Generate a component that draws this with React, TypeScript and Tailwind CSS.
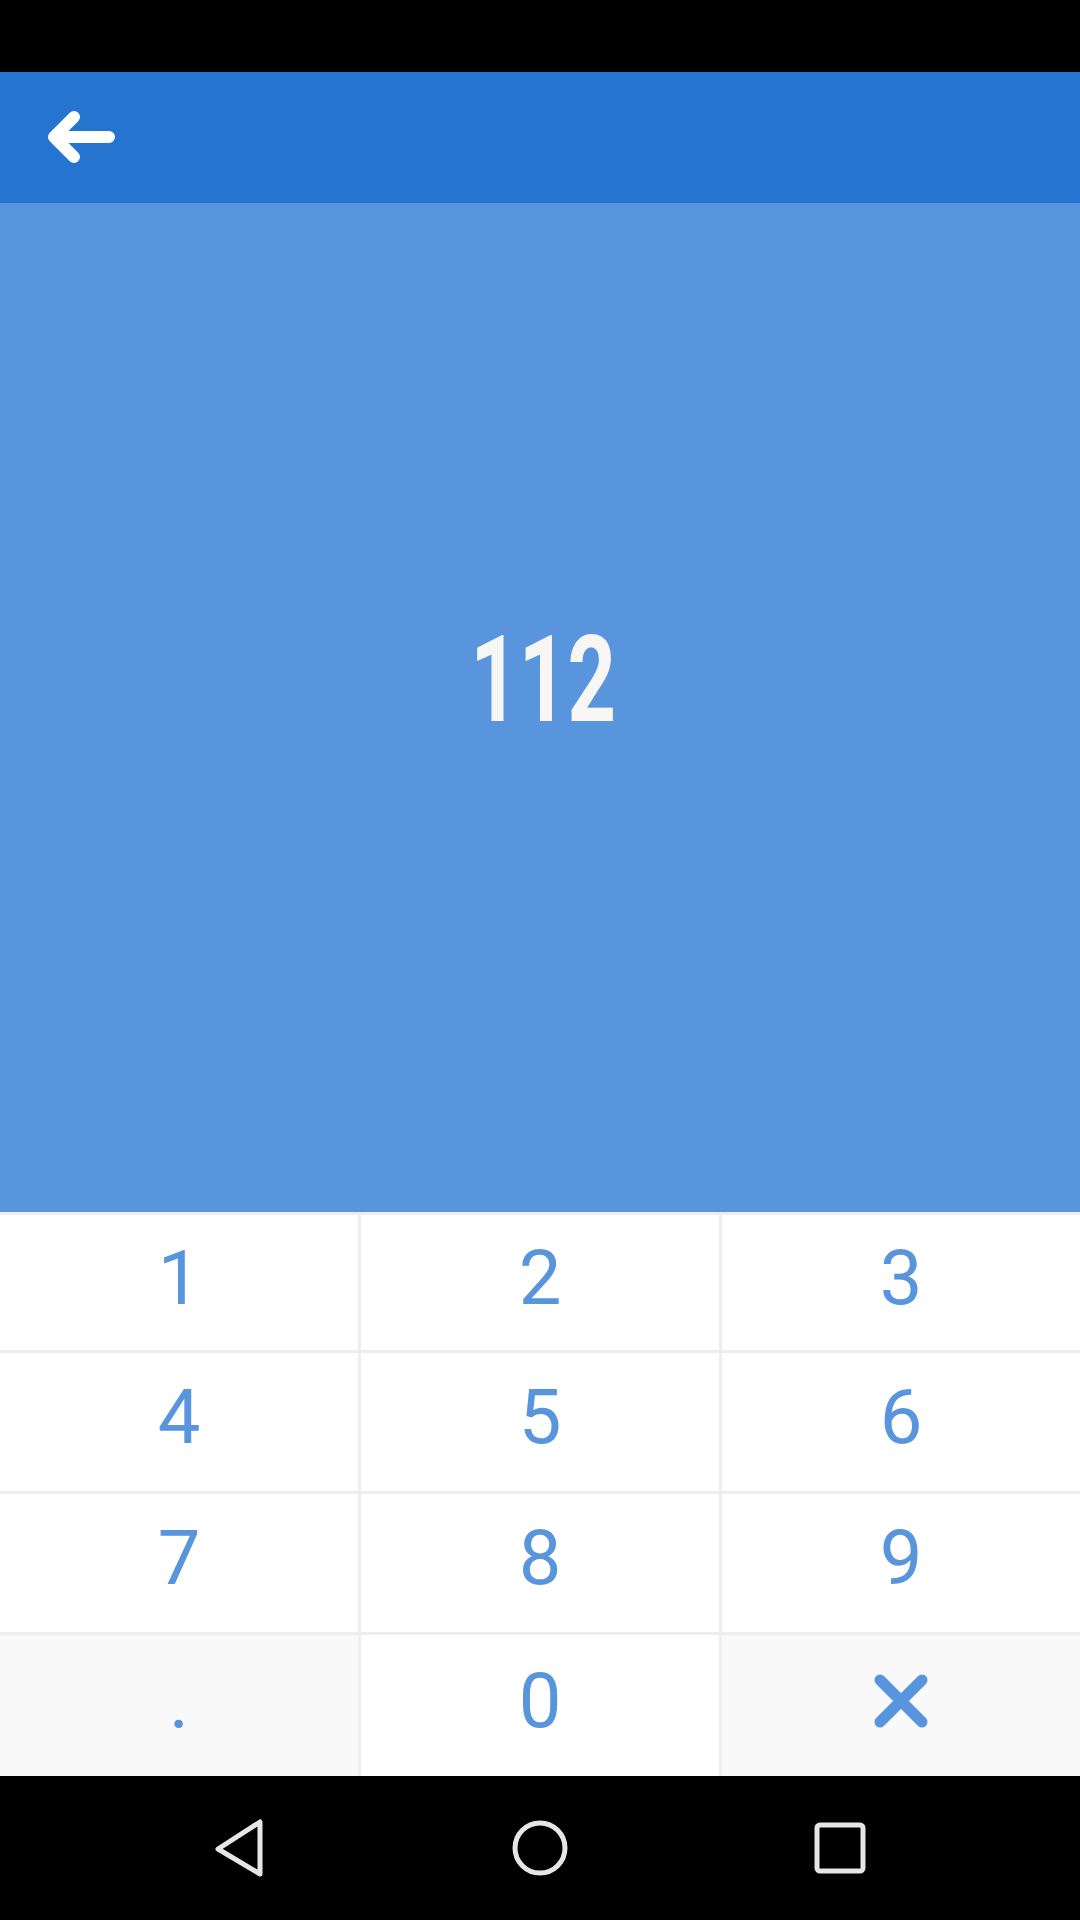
import { ReactNode } from 'react';

const KEYS: { label: ReactNode; muted?: boolean }[] = [
  { label: '1' },
  { label: '2' },
  { label: '3' },
  { label: '4' },
  { label: '5' },
  { label: '6' },
  { label: '7' },
  { label: '8' },
  { label: '9' },
  { label: '.', muted: true },
  { label: '0' },
  { label: <ClearIcon />, muted: true },
];

function BackArrow() {
  return (
    <svg width="80" height="64" viewBox="0 0 80 64" fill="none">
      <path
        d="M30 12 L10 32 L30 52 M10 32 L65 32"
        stroke="#ffffff"
        strokeWidth="12"
        strokeLinecap="round"
        strokeLinejoin="round"
      />
    </svg>
  );
}

function ClearIcon() {
  return (
    <svg width="60" height="60" viewBox="0 0 60 60" fill="none">
      <path d="M9 9 L51 51 M51 9 L9 51" stroke="#5995dc" strokeWidth="11" strokeLinecap="round" />
    </svg>
  );
}

function NavBar() {
  return (
    <div className="h-[144px] bg-black flex items-center justify-center gap-[244px]">
      <svg width="52" height="60" viewBox="0 0 52 60" fill="none">
        <path d="M46 4 L46 56 L4 31 Z" stroke="#e6e6e6" strokeWidth="5" strokeLinejoin="round" />
      </svg>
      <svg width="60" height="60" viewBox="0 0 60 60" fill="none">
        <circle cx="30" cy="30" r="25" stroke="#e6e6e6" strokeWidth="5" />
      </svg>
      <svg width="52" height="52" viewBox="0 0 52 52" fill="none">
        <rect x="3" y="3" width="46" height="46" rx="3" stroke="#e6e6e6" strokeWidth="5" />
      </svg>
    </div>
  );
}

export default function App() {
  return (
    <div className="w-[1080px] h-[1920px] flex flex-col overflow-hidden">
      {/* status bar */}
      <div className="h-[72px] bg-black" />

      {/* toolbar */}
      <div className="h-[131px] bg-[#2574cf] border-b border-[#1c6ddc] flex items-center pl-[44px]">
        <BackArrow />
      </div>

      {/* display */}
      <div className="flex-1 bg-[#5995dc] flex items-center justify-center pb-[55px] pl-[6px]">
        <span className="inline-block scale-x-[0.7] text-[121px] font-bold leading-none text-[#f8f6f4] font-[Roboto,sans-serif]">
          112
        </span>
      </div>

      {/* keypad */}
      <div className="h-[564px] bg-[#eeeeee] pt-[3px] grid grid-cols-3 grid-rows-[135px_138px_138px_141px] gap-[3px]">
        {KEYS.map((k, i) => (
          <button
            key={i}
            className={`flex items-center justify-center pb-[10px] text-[76px] leading-none text-[#5995dc] font-[Roboto,sans-serif] ${
              k.muted ? 'bg-[#f9f9f9]' : 'bg-white'
            }`}
          >
            {k.label}
          </button>
        ))}
      </div>

      <NavBar />
    </div>
  );
}
